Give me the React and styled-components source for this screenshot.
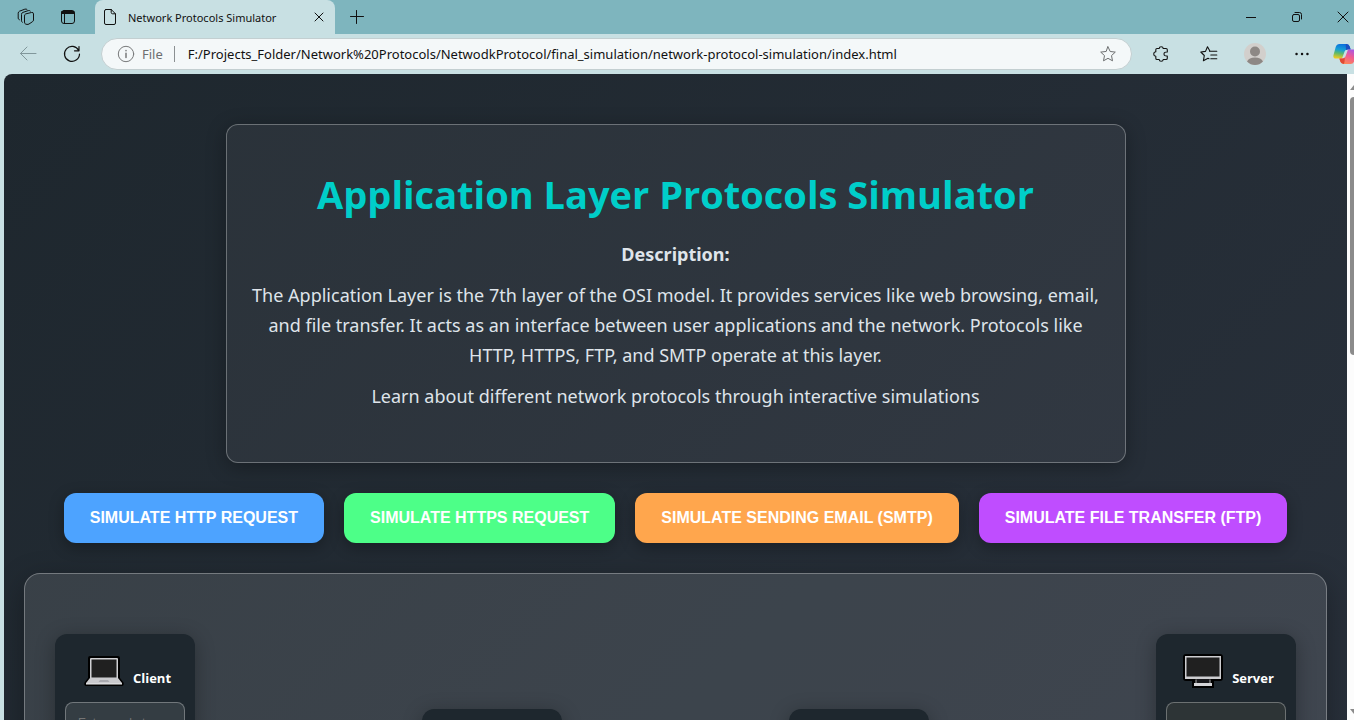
import React from "react";
import styled, { createGlobalStyle } from "styled-components";

const Global = createGlobalStyle`
  * { box-sizing: border-box; }
  html, body { margin: 0; height: 100%; overflow: hidden; }
  body { font-family: "Open Sans", "Noto Sans", sans-serif; }
  button { border: 0; background: none; padding: 0; font: inherit; color: inherit; cursor: pointer; }
  svg { display: block; flex: none; }
`;

const Window = styled.div`
  height: 100vh;
  display: flex;
  flex-direction: column;
  background: #c8e0e3;
  overflow: hidden;
`;

const TitleBar = styled.header`
  height: 34px;
  flex: none;
  display: flex;
  background: #7eb5be;
`;

const TabTools = styled.div`
  width: 95px;
  display: flex;
  align-items: center;
  gap: 24px;
  padding-left: 17px;
`;

const TitleTools = styled.div`
  margin-left: auto;
  width: 126px;
  display: flex;
  align-items: center;
  overflow: hidden;
`;

const IconButton = styled.button`
  width: ${(p) => p.$w || 18}px;
  height: ${(p) => p.$h || 30}px;
  flex: none;
  display: flex;
  align-items: center;
  justify-content: center;
  color: ${(p) => p.$color || "#111"};
`;

const Tab = styled.div`
  width: 240px;
  display: flex;
  align-items: center;
  background: #c8e0e3;
  border-radius: 8px 8px 0 0;
  padding: 0 7px 0 9px;
  gap: 12px;
  font-family: "Noto Sans", sans-serif;
  font-size: 11px;
  color: #111;
`;

const TabTitle = styled.span`
  flex: 1;
  white-space: nowrap;
`;

const Toolbar = styled.div`
  height: 40px;
  flex: none;
  display: flex;
  align-items: center;
  padding-left: 19px;
`;

const NavTools = styled.div`
  display: flex;
  gap: 26px;
  width: 82px;
  flex: none;
`;

const AddressBar = styled.div`
  flex: 1;
  min-width: 0;
  height: 32px;
  display: flex;
  align-items: center;
  background: #f4f8f9;
  border: 1px solid #c3cfd1;
  border-radius: 16px;
  padding: 0 14px 0 15px;
  font-family: "Noto Sans", sans-serif;
  font-size: 13px;
`;

const FileLabel = styled.label`
  color: #6d6f70;
  padding: 0 11px 0 7px;
`;

const Divider = styled.span`
  width: 1px;
  height: 16px;
  background: ${(p) => p.$color || "#8b9092"};
`;

const AddressInput = styled.input`
  flex: 1;
  min-width: 0;
  border: 0;
  outline: 0;
  background: transparent;
  font: inherit;
  color: #111;
  padding: 0 13px;
`;

const BrowserTools = styled.div`
  display: flex;
  align-items: center;
  flex: none;
  width: 222px;
  padding-left: 20px;
  overflow: hidden;
`;

const ToolDivider = styled(Divider)`
  margin: 0 15px;
`;

const Body = styled.div`
  flex: 1;
  min-height: 0;
  display: flex;
  padding-left: 4px;
`;

const Viewport = styled.div`
  flex: 1;
  min-width: 0;
  overflow: hidden;
  border-top-left-radius: 8px;
`;

const ScrollTrack = styled.div`
  width: 7px;
  flex: none;
  overflow: hidden;
  background: #fcfcfc;
  display: flex;
  flex-direction: column;
  padding: 11px 0 6px 3px;
`;

const ScrollThumb = styled.div`
  width: 8px;
  height: 41%;
  margin: 7px 0 auto;
  border-radius: 4px;
  background: #8b8b8b;
`;

const Page = styled.main`
  min-height: 1520px;
  padding: 50px 20px;
  display: flex;
  flex-direction: column;
  align-items: center;
  gap: 30px;
  background: linear-gradient(135deg, #1e272e, #2d3440);
`;

const Intro = styled.section`
  width: 100%;
  max-width: 900px;
  padding: 39px 20px 40px;
  border: 1px solid rgba(255, 255, 255, 0.3);
  border-radius: 12px;
  background: rgba(255, 255, 255, 0.05);
  box-shadow: 0 4px 20px rgba(0, 0, 0, 0.3);
  text-align: center;
  color: #dfe4ea;
  font-size: 18px;
  line-height: 30px;
`;

const Title = styled.h1`
  margin: 0 0 15px;
  font-size: 38px;
  line-height: 60px;
  font-weight: 700;
  color: #00cec9;
`;

const Text = styled.p`
  margin: 0 0 11px;
  font-family: "Noto Sans", sans-serif;
`;

const Actions = styled.div`
  display: flex;
  flex-wrap: wrap;
  justify-content: center;
  gap: 20px;
`;

const ActionButton = styled.button`
  padding: 16px 26px;
  border-radius: 12px;
  background: ${(p) => p.$bg};
  color: #fff;
  font: bold 16px/18px "Liberation Sans", Arial, sans-serif;
  text-transform: uppercase;
  box-shadow: 0 4px 15px rgba(0, 0, 0, 0.3);
`;

const Network = styled.section`
  align-self: stretch;
  min-height: 400px;
  padding: 60px 30px;
  display: flex;
  justify-content: space-between;
  align-items: center;
  border: 1px solid rgba(255, 255, 255, 0.3);
  border-radius: 16px;
  background: rgba(255, 255, 255, 0.11);
  box-shadow: 0 8px 30px rgba(0, 0, 0, 0.3);
`;

const Node = styled.div`
  width: 140px;
  height: ${(p) => (p.$router ? 130 : 280)}px;
  padding: 10px;
  border-radius: 12px;
  background: #1e272e;
  box-shadow: 0 4px 20px rgba(0, 0, 0, 0.3);
  color: #fff;
`;

const NodeName = styled.label`
  height: 58px;
  padding: 0 0 4px 5px;
  display: flex;
  align-items: center;
  justify-content: center;
  gap: 9px;
  font-size: 13px;
  font-weight: 700;
  line-height: 20px;
`;

const NodeCaption = styled.span`
  padding-top: 14px;
`;

const NodeInput = styled.input`
  width: 100%;
  height: 42px;
  padding: 10px 12px;
  border: 1px solid rgba(255, 255, 255, 0.3);
  border-radius: 8px;
  background: ${(p) => p.$bg};
  color: #fff;
  font: 12px "Liberation Sans", Arial, sans-serif;
  &::placeholder { color: #757575; opacity: 1; }
`;

const Line = ({ w = 16, h = w, box, sw = 1, children }) => (
  <svg width={w} height={h} viewBox={box || `0 0 ${w} ${h}`} fill="none" stroke="currentColor"
    strokeWidth={sw} strokeLinecap="round" strokeLinejoin="round" aria-hidden="true">
    {children}
  </svg>
);

const Workspaces = () => (
  <Line w={18}>
    <path d="M7.5 7.7 Q7.5 6.3 8.7 5.9 L14.4 4.5 Q16.5 4 16.5 5.9 V12 Q16.5 13 15.5 13.7 L12 16 Q11 16.6 10 16.4 L8.7 16.1 Q7.5 15.8 7.5 14.5Z" />
    <path d="M5.3 14.3 Q4.5 13.8 4.5 12.8 V6.4 Q4.5 4.8 5.9 4.4 L11.3 2.6 Q12.7 2.2 13.3 3" />
    <path d="M2.4 11.8 Q1.2 11.3 1.2 10.2 V5.2 Q1.2 3.8 2.5 3.2 L7.8 1.2 Q9.3 .7 10 1.4" />
  </Line>
);

const TabActions = () => (
  <Line w={16}>
    <rect x="1.5" y="1.5" width="13" height="13" rx="2.5" />
    <path d="M2 2.5 H14 V4.5 H2Z M4.5 5 V14" fill="currentColor" />
  </Line>
);

const PageIcon = () => (
  <Line w={12} h={16}>
    <path d="M2 .5 H7.2 L11.5 4.8 V14 Q11.5 15.5 10 15.5 H2 Q.5 15.5 .5 14 V2 Q.5 .5 2 .5Z M7.2 .5 V3.4 Q7.2 4.8 8.6 4.8 H11.5" />
  </Line>
);

const Copilot = () => (
  <svg width="24" height="20" viewBox="0 0 24 20" aria-hidden="true">
    <defs>
      <linearGradient id="cool" x1=".5" y1="0" x2=".3" y2="1">
        <stop offset="0" stopColor="#0b6fdd" /><stop offset=".4" stopColor="#16a0d5" />
        <stop offset=".65" stopColor="#5eb96b" /><stop offset="1" stopColor="#f5cb1b" />
      </linearGradient>
      <linearGradient id="warm" x1=".8" y1="0" x2=".3" y2="1">
        <stop offset="0" stopColor="#a557e8" /><stop offset=".45" stopColor="#ef5b93" />
        <stop offset="1" stopColor="#ff8952" />
      </linearGradient>
    </defs>
    <path d="M6.5 0 H13.5 Q16 0 16.8 2.7 L17.6 5.5 H14.5 Q12.4 5.5 11.7 7.3 L9 14.5 H3 Q-.3 14.5 .5 11 L2.7 3 Q3.6 0 6.5 0Z" fill="url(#cool)" />
    <path d="M12.7 0 H13.5 Q16 0 16.8 2.7 L17.6 5.5 H14.5 Q13.6 5.5 13 5.9Z" fill="#1c4fc0" />
    <path d="M17.5 20 H10.5 Q8 20 7.2 17.3 L6.4 14.5 H9.5 Q11.6 14.5 12.3 12.7 L15 5.5 H21 Q24.3 5.5 23.5 9 L21.3 17 Q20.4 20 17.5 20Z" fill="url(#warm)" />
    <path d="M6.4 14.5 H9.5 Q11 14.5 11.8 13.6 L11.5 18 Q11 20 10.5 20 Q8 20 7.2 17.3Z" fill="#e04a35" />
  </svg>
);

const Laptop = () => (
  <svg width="40" height="31" viewBox="0 0 40 31" aria-hidden="true">
    <path d="M6 0 H34 Q36 0 36 2 V22 L39.5 26.5 Q40.5 30 37 30 H3 Q-.5 30 .5 26.5 L4 22 V2 Q4 0 6 0Z" fill="#000" />
    <path d="M7 2 H33 Q34 2 34 3 V22 H6 V3 Q6 2 7 2Z" fill="#d0d0d3" />
    <rect x="7.5" y="3.5" width="25" height="18" fill="#202020" />
    <path d="M6 22 H34 L38 27 V28 H2 V27Z" fill="#cacacd" />
    <path d="M16 24 H24 L25.5 26 H14.5Z" fill="#a9a9ae" />
    <path d="M2 28 H38" stroke="#eee" />
  </svg>
);

const Desktop = () => (
  <svg width="40" height="34" viewBox="0 0 40 34" aria-hidden="true">
    <path d="M3 0 H37 Q40 0 40 3 V24 Q40 27 37 27 H31 V29 H31 V34 H9 V29 H9 V27 H3 Q0 27 0 24 V3 Q0 0 3 0Z" fill="#000" />
    <rect x="2" y="2" width="36" height="23" fill="#cdcdd0" />
    <rect x="3.5" y="3.5" width="33" height="19" fill="#202020" />
    <path d="M13 25 H27 V29 H13Z" fill="#17171a" />
    <path d="M13 25.5 V29 M27 25.5 V29" stroke="#aaa" />
    <rect x="11" y="29" width="18" height="3" fill="#d4d4d7" />
  </svg>
);

const star = "M8 .8 L10.2 5.5 L15.3 6.1 L11.5 9.6 L12.5 14.8 L8 12.3 L3.5 14.8 L4.5 9.6 L.7 6.1 L5.8 5.5Z";

const actions = [
  ["Simulate HTTP Request", "#4da3ff"],
  ["Simulate HTTPS Request", "#4dff88"],
  ["Simulate Sending Email (SMTP)", "#ffa64d"],
  ["Simulate File Transfer (FTP)", "#bf4dff"],
];

export default function App() {
  return (
    <Window>
      <Global />
      <TitleBar>
        <TabTools>
          <IconButton aria-label="Workspaces"><Workspaces /></IconButton>
          <IconButton aria-label="Tab actions"><TabActions /></IconButton>
        </TabTools>
        <Tab>
          <PageIcon />
          <TabTitle>Network Protocols Simulator</TabTitle>
          <IconButton aria-label="Close tab"><Line w={10}><path d="M1 1 L9 9 M9 1 L1 9" /></Line></IconButton>
        </Tab>
        <IconButton $w={44} $h={34} aria-label="New tab"><Line w={14}><path d="M6.5 .5 V13.5 M.5 6.5 H13.5" /></Line></IconButton>
        <TitleTools>
          <IconButton $w={46} aria-label="Minimize"><Line w={10}><path d="M0 5.5 H10" /></Line></IconButton>
          <IconButton $w={46} aria-label="Restore">
            <Line w={10}>
              <rect x=".5" y="2.5" width="7" height="7" rx="1.5" />
              <path d="M3 .5 H7.5 Q9.5 .5 9.5 2.5 V7" />
            </Line>
          </IconButton>
          <IconButton $w={46} aria-label="Close"><Line w={12}><path d="M1 1 L11 11 M11 1 L1 11" /></Line></IconButton>
        </TitleTools>
      </TitleBar>

      <Toolbar>
        <NavTools>
          <IconButton aria-label="Back" $color="#81979b"><Line w={18}><path d="M17 8.5 H1.5 M8 2 L1.5 8.5 L8 15" /></Line></IconButton>
          <IconButton aria-label="Refresh">
            <Line w={18} sw={1.2}><path d="M15.7 5.5 A7.5 7.5 0 1 0 16.5 9 M16 1.5 V5.8 H11.5" /></Line>
          </IconButton>
        </NavTools>
        <AddressBar>
          <IconButton aria-label="Site information" $color="#77797a">
            <Line w={18}>
              <circle cx="9" cy="9" r="7.7" />
              <path d="M9 8.2 V12.5 M9 5.5 V5.7" strokeWidth="1.5" />
            </Line>
          </IconButton>
          <FileLabel htmlFor="address">File</FileLabel>
          <Divider />
          <AddressInput id="address" defaultValue="F:/Projects_Folder/Network%20Protocols/NetwodkProtocol/final_simulation/network-protocol-simulation/index.html" />
          <IconButton aria-label="Add to favorites" $color="#6d6f70"><Line w={16}><path d={star} /></Line></IconButton>
        </AddressBar>
        <BrowserTools>
          <IconButton aria-label="Extensions">
            <Line w={16} sw={1.1}>
              <path d="M4 2.5 H6.2 Q6.3 .7 8.2 .7 Q10.1 .7 10.2 2.5 H13 Q14.3 2.5 14.3 3.8 V6 Q11 5.8 11 8 Q11 10.2 14.3 10 V12.2 Q14.3 13.5 13 13.5 H10.2 Q10.1 15.3 8.2 15.3 Q6.3 15.3 6.2 13.5 H4 Q2.8 13.5 2.8 12.2 V10.2 Q.7 10 .7 8 Q.7 6 2.8 5.8 V3.8 Q2.8 2.5 4 2.5Z" />
            </Line>
          </IconButton>
          <ToolDivider $color="#9fb0b4" />
          <IconButton aria-label="Favorites">
            <Line w={18} h={16} sw={1.1}>
              <path d="M10 5.2 L7.5 .8 L5.5 5.4 L.8 6 L4.3 9.5 L3.4 14.8 L8 12.3 L9 12.8 M9.5 5.3 H16.8 M10.8 9 H16.8 M10.8 12.8 H16.8" />
            </Line>
          </IconButton>
          <IconButton $w={74} aria-label="Profile">
            <svg width="22" height="22" viewBox="0 0 22 22" aria-hidden="true">
              <circle cx="11" cy="11" r="11" fill="#d2cfcc" />
              <circle cx="11" cy="8.5" r="5" fill="#8d8885" />
              <path d="M3 18.5 Q5 14.5 11 14.5 Q17 14.5 19 18.5 Q15.5 22 11 22 Q6.5 22 3 18.5Z" fill="#8d8885" />
            </svg>
          </IconButton>
          <IconButton $w={20} aria-label="Settings and more">
            <Line w={14} sw={2.4}><path d="M1.5 7 H1.6 M7 7 H7.1 M12.4 7 H12.5" /></Line>
          </IconButton>
          <IconButton $w={66} aria-label="Copilot"><Copilot /></IconButton>
        </BrowserTools>
      </Toolbar>

      <Body>
        <Viewport>
          <Page>
            <Intro>
              <Title>Application Layer Protocols Simulator</Title>
              <Text><strong>Description:</strong></Text>
              <Text>
                The Application Layer is the 7th layer of the OSI model. It provides services like web browsing, email,
                and file transfer. It acts as an interface between user applications and the network. Protocols like
                HTTP, HTTPS, FTP, and SMTP operate at this layer.
              </Text>
              <Text>Learn about different network protocols through interactive simulations</Text>
            </Intro>
            <Actions>
              {actions.map(([label, bg]) => <ActionButton key={label} $bg={bg}>{label}</ActionButton>)}
            </Actions>
            <Network>
              <Node>
                <NodeName htmlFor="client"><Laptop /><NodeCaption>Client</NodeCaption></NodeName>
                <NodeInput id="client" $bg="#343d43" placeholder="Enter packet" />
              </Node>
              <Node $router />
              <Node $router />
              <Node>
                <NodeName htmlFor="server"><Desktop /><NodeCaption>Server</NodeCaption></NodeName>
                <NodeInput id="server" $bg="#2d3436" readOnly />
              </Node>
            </Network>
          </Page>
        </Viewport>
        <ScrollTrack>
          <svg width="8" height="5" viewBox="0 0 8 5" aria-hidden="true"><path d="M0 5 L4 0 L8 5Z" fill="#8b8b8b" /></svg>
          <ScrollThumb />
          <svg width="8" height="5" viewBox="0 0 8 5" aria-hidden="true"><path d="M0 0 H8 L4 5Z" fill="#8b8b8b" /></svg>
        </ScrollTrack>
      </Body>
    </Window>
  );
}
